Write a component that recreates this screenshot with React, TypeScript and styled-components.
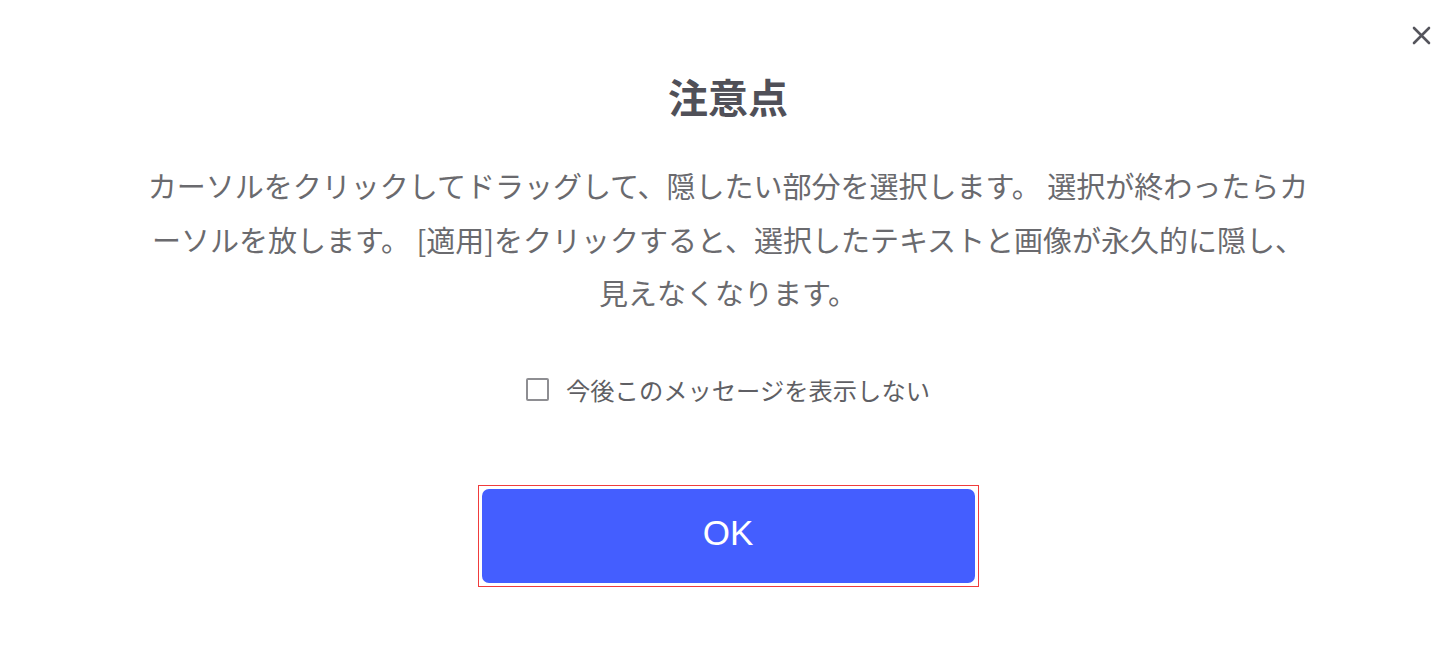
import React, { useState } from 'react';
import styled, { createGlobalStyle } from 'styled-components';

const GlobalStyle = createGlobalStyle`
  html, body {
    margin: 0;
    padding: 0;
    background: #ffffff;
  }
  body {
    font-family: "Noto Sans CJK JP", "Noto Sans", sans-serif;
  }
`;

const Dialog = styled.div`
  position: relative;
  width: 1456px;
  height: 670px;
  box-sizing: border-box;
  padding-top: 70px;
  display: flex;
  flex-direction: column;
  align-items: center;
  background: #fff;
`;

const CloseButton = styled.button`
  position: absolute;
  top: 22px;
  right: 22px;
  width: 26px;
  height: 26px;
  padding: 0;
  border: none;
  background: transparent;
  cursor: pointer;
  display: flex;
  align-items: center;
  justify-content: center;
`;

const Title = styled.h2`
  margin: 0;
  font-size: 40px;
  line-height: 52px;
  font-weight: 700;
  color: #505058;
`;

const Message = styled.p`
  margin: 37px 0 0;
  width: 1175px;
  font-size: 29px;
  line-height: 53.5px;
  color: #6a6a6e;
  text-align: center;
`;

const CheckRow = styled.label`
  margin-top: 54px;
  display: flex;
  align-items: center;
  gap: 17px;
  font-size: 24.3px;
  line-height: 32px;
  color: #5f5f64;
  cursor: pointer;
`;

const Box = styled.span<{ $checked: boolean }>`
  width: 23px;
  height: 23px;
  box-sizing: border-box;
  border: 2px solid #8e8e92;
  border-radius: 2px;
  background: ${(p) => (p.$checked ? '#445eff' : '#fff')};
`;

const ButtonFrame = styled.div`
  margin-top: 79px;
  padding: 3px;
  border: 1px solid #f03c3c;
  display: flex;
`;

const OkButton = styled.button`
  width: 493px;
  height: 94px;
  padding: 0 0 6px;
  border: none;
  border-radius: 7px;
  background: #445eff;
  color: #fff;
  font-family: "Liberation Sans", Arial, sans-serif;
  font-size: 35px;
  cursor: pointer;
`;

const App: React.FC = () => {
  const [checked, setChecked] = useState(false);
  return (
    <>
      <GlobalStyle />
      <Dialog>
        <CloseButton aria-label="閉じる">
          <svg width="19" height="19" viewBox="0 0 19 19">
            <path d="M2 2 L17 17 M17 2 L2 17" stroke="#55555c" strokeWidth="2.6" strokeLinecap="round" />
          </svg>
        </CloseButton>
        <Title>注意点</Title>
        <Message>
          カーソルをクリックしてドラッグして、隠したい部分を選択します。 選択が終わったらカーソルを放します。 [適用]をクリックすると、選択したテキストと画像が永久的に隠し、見えなくなります。
        </Message>
        <CheckRow onClick={() => setChecked(!checked)}>
          <Box $checked={checked} />
          今後このメッセージを表示しない
        </CheckRow>
        <ButtonFrame>
          <OkButton>OK</OkButton>
        </ButtonFrame>
      </Dialog>
    </>
  );
};

export default App;
